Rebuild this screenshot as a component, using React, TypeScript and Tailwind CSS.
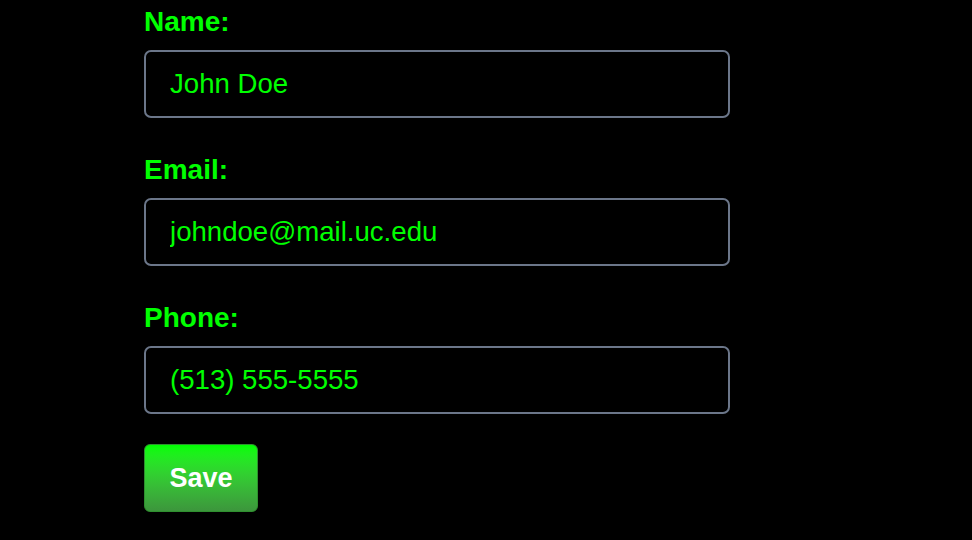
import { useState } from 'react';

const fields = [
  { id: 'name', label: 'Name:', value: 'John Doe', type: 'text' },
  { id: 'email', label: 'Email:', value: 'johndoe@mail.uc.edu', type: 'email' },
  { id: 'phone', label: 'Phone:', value: '(513) 555-5555', type: 'tel' },
];

export default function App() {
  const [values, setValues] = useState<Record<string, string>>(
    Object.fromEntries(fields.map((f) => [f.id, f.value]))
  );

  return (
    <div
      className="min-h-screen bg-black pl-[144px] pt-[6px]"
      style={{ fontFamily: '"Liberation Sans", Arial, sans-serif' }}
    >
      <form className="flex w-[586px] flex-col" onSubmit={(e) => e.preventDefault()}>
        {fields.map((f, i) => (
          <div key={f.id} className={i === 0 ? '' : 'mt-[36px]'}>
            <label htmlFor={f.id} className="block text-[28px] leading-8 font-bold text-[#00ff00]">
              {f.label}
            </label>
            <input
              id={f.id}
              type={f.type}
              value={values[f.id]}
              onChange={(e) => setValues({ ...values, [f.id]: e.target.value })}
              className="mt-[12px] block h-[68px] w-full rounded-[7px] border-2 border-[#6b7689] bg-black px-6 text-[27.6px] text-[#00ff00] outline-none"
            />
          </div>
        ))}
        <button
          type="submit"
          className="mt-[30px] h-[68px] w-[114px] rounded-md border border-[#2f8f2f] bg-gradient-to-b from-[#00ff00] to-[#3c963c] text-[27px] font-bold text-white"
        >
          Save
        </button>
      </form>
    </div>
  );
}
